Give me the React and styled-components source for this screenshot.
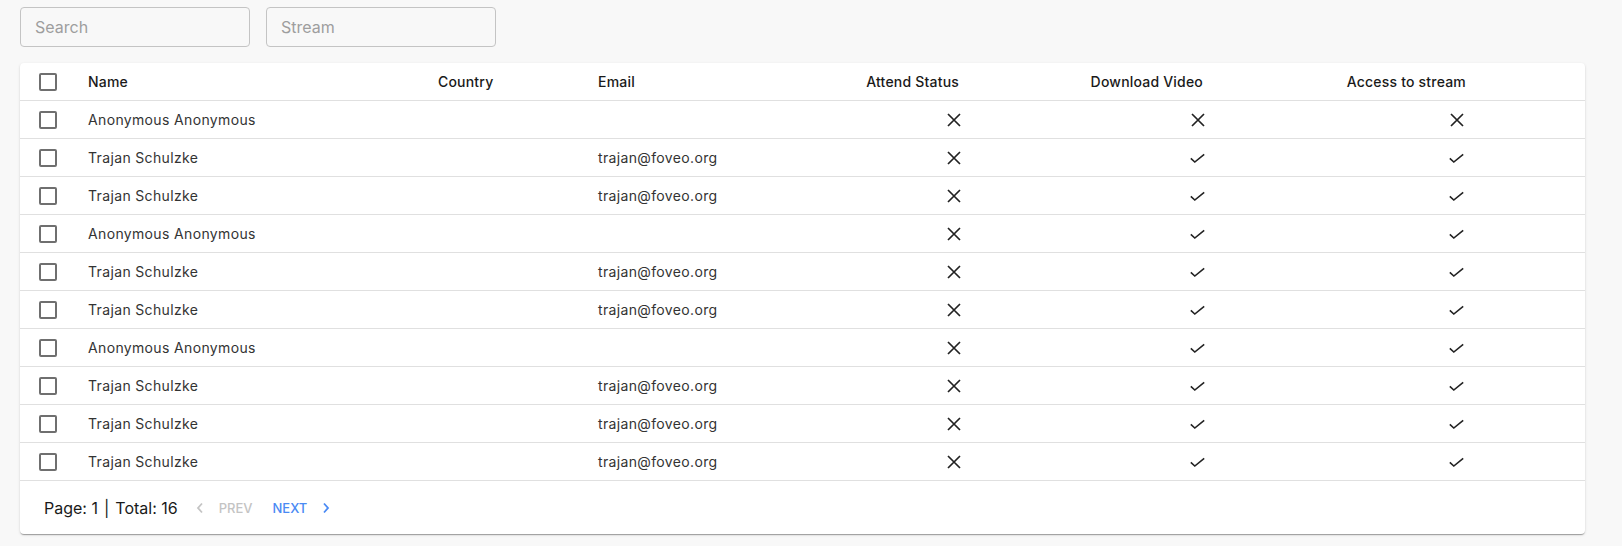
import styled, { createGlobalStyle } from 'styled-components';

const GlobalStyle = createGlobalStyle`
  body {
    margin: 0;
    background: #f8f8f8;
    font-family: 'Inter', 'Liberation Sans', sans-serif;
    color: rgba(0, 0, 0, 0.87);
  }
`;

const rows = [
  { name: 'Anonymous Anonymous', email: '', attend: false, download: false, access: false },
  { name: 'Trajan Schulzke', email: 'trajan@foveo.org', attend: false, download: true, access: true },
  { name: 'Trajan Schulzke', email: 'trajan@foveo.org', attend: false, download: true, access: true },
  { name: 'Anonymous Anonymous', email: '', attend: false, download: true, access: true },
  { name: 'Trajan Schulzke', email: 'trajan@foveo.org', attend: false, download: true, access: true },
  { name: 'Trajan Schulzke', email: 'trajan@foveo.org', attend: false, download: true, access: true },
  { name: 'Anonymous Anonymous', email: '', attend: false, download: true, access: true },
  { name: 'Trajan Schulzke', email: 'trajan@foveo.org', attend: false, download: true, access: true },
  { name: 'Trajan Schulzke', email: 'trajan@foveo.org', attend: false, download: true, access: true },
  { name: 'Trajan Schulzke', email: 'trajan@foveo.org', attend: false, download: true, access: true },
];

const COLUMNS = '52px 350px 160px 230px 163px 244px 263px 1fr';

const CrossIcon = () => (
  <svg width='14' height='14' viewBox='0 0 14 14'>
    <path d='M1 1 L13 13 M13 1 L1 13' stroke='#222' strokeWidth='1.7' fill='none' />
  </svg>
);

const CheckIcon = () => (
  <svg width='15' height='14' viewBox='0 0 15 14'>
    <path d='M0.8 7.4 L4.8 11 L14.2 3.4' stroke='#222' strokeWidth='1.6' fill='none' />
  </svg>
);

const Status = ({ value }) => (value ? <CheckIcon /> : <CrossIcon />);

const Chevron = ({ dir, color }) => (
  <svg width='8' height='12' viewBox='0 0 8 12'>
    <path
      d={dir === 'left' ? 'M6 1.5 L2 6 L6 10.5' : 'M2 1.5 L6 6 L2 10.5'}
      stroke={color}
      strokeWidth='1.8'
      fill='none'
    />
  </svg>
);

const App = () => {
  return (
    <Page>
      <GlobalStyle />
      <Filters>
        <Input placeholder='Search' />
        <Input placeholder='Stream' />
      </Filters>
      <Card>
        <HeadRow>
          <CheckCell>
            <Box />
          </CheckCell>
          <HeadCell>Name</HeadCell>
          <HeadCell>Country</HeadCell>
          <HeadCell>Email</HeadCell>
          <HeadCell $right>Attend Status</HeadCell>
          <HeadCell $right>Download Video</HeadCell>
          <HeadCell $right>Access to stream</HeadCell>
          <HeadCell />
        </HeadRow>
        {rows.map((row, i) => (
          <Row key={i}>
            <CheckCell>
              <Box />
            </CheckCell>
            <Cell>{row.name}</Cell>
            <Cell />
            <Cell>{row.email}</Cell>
            <IconCell>
              <Status value={row.attend} />
            </IconCell>
            <IconCell>
              <Status value={row.download} />
            </IconCell>
            <IconCell $pr={18}>
              <Status value={row.access} />
            </IconCell>
            <Cell />
          </Row>
        ))}
        <Footer>
          <PageInfo>
            Page: 1<Sep>|</Sep>Total: 16
          </PageInfo>
          <NavButton $disabled>
            <Chevron dir='left' color='#c4c4c4' />
            <span>Prev</span>
          </NavButton>
          <NavButton>
            <span>Next</span>
            <Chevron dir='right' color='#4a8af4' />
          </NavButton>
        </Footer>
      </Card>
    </Page>
  );
};

const Page = styled.div`
  padding: 7px 37px 12px 20px;
`;

const Filters = styled.div`
  display: flex;
  gap: 16px;
  margin-bottom: 16px;
`;

const Input = styled.input`
  box-sizing: border-box;
  width: 230px;
  height: 40px;
  padding: 0 14px;
  border: 1px solid #c4c4c4;
  border-radius: 4px;
  background: transparent;
  font-family: 'Inter', 'Liberation Sans', sans-serif;
  font-size: 16px;
  color: #333;
  outline: none;

  &::placeholder {
    color: #9e9e9e;
  }
`;

const Card = styled.div`
  background: #fff;
  border-radius: 4px;
  box-shadow: 0 2px 1px -1px rgba(0, 0, 0, 0.2), 0 1px 1px 0 rgba(0, 0, 0, 0.14),
    0 1px 3px 0 rgba(0, 0, 0, 0.12);
  overflow: hidden;
`;

const HeadRow = styled.div`
  display: grid;
  grid-template-columns: ${COLUMNS};
  height: 37px;
  border-bottom: 1px solid #e0e0e0;
  align-items: center;
`;

const Row = styled(HeadRow)`
  height: 37px;
`;

const CheckCell = styled.div`
  padding-left: 19px;
  display: flex;
  align-items: center;
`;

const Box = styled.span`
  box-sizing: border-box;
  width: 18px;
  height: 18px;
  border: 2px solid #6f6f6f;
  border-radius: 2px;
`;

const HeadCell = styled.div`
  padding: 0 16px;
  font-size: 14px;
  font-weight: 500;
  letter-spacing: 0.2px;
  color: #1a1a1a;
  text-align: ${(p) => (p.$right ? 'right' : 'left')};
  white-space: nowrap;
`;

const Cell = styled.div`
  padding: 0 16px;
  font-size: 14px;
  letter-spacing: 0.35px;
  color: #333;
  white-space: nowrap;
`;

const IconCell = styled.div`
  display: flex;
  justify-content: flex-end;
  align-items: center;
  padding-right: ${(p) => p.$pr || 14}px;
`;

const Footer = styled.div`
  display: flex;
  align-items: center;
  height: 53px;
  padding-left: 24px;
`;

const PageInfo = styled.span`
  font-size: 16px;
  color: #1a1a1a;
  margin-right: 18px;
`;

const Sep = styled.span`
  margin: 0 6px;
`;

const NavButton = styled.div`
  display: flex;
  align-items: center;
  gap: 15px;
  margin-right: 20px;
  font-size: 13px;
  font-weight: 500;
  letter-spacing: 0;
  text-transform: uppercase;
  color: ${(p) => (p.$disabled ? '#c4c4c4' : '#4a8af4')};
`;

export default App;
